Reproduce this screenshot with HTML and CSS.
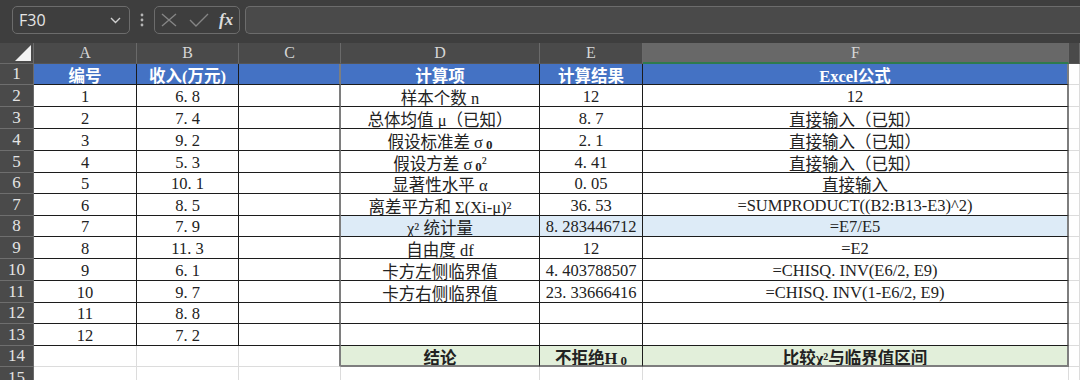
FILE: index.html
```html
<!DOCTYPE html>
<html lang="zh-CN">
<head>
    <meta charset="UTF-8">
    <meta name="viewport" content="width=device-width, initial-scale=1.0">
    <title>卡方检验 - 方差</title>
    <link rel="stylesheet" href="styles.css">
</head>
<body>
    <div class="toolbar">
        <div class="namebox">
            <span>F30</span>
            <svg class="chev" width="11" height="7" viewBox="0 0 11 7"><polyline points="1,1 5.5,5.5 10,1" fill="none" stroke="#cfcfcf" stroke-width="1.4"/></svg>
        </div>
        <svg class="dots" width="6" height="14" viewBox="0 0 6 14"><circle cx="3" cy="2" r="1.4" fill="#b5b5b5"/><circle cx="3" cy="7" r="1.4" fill="#b5b5b5"/><circle cx="3" cy="12" r="1.4" fill="#b5b5b5"/></svg>
        <div class="fxbox">
            <svg width="16" height="14" viewBox="0 0 16 14"><path d="M1 1 L15 13 M15 1 L1 13" stroke="#858585" stroke-width="1.4" fill="none"/></svg>
            <svg width="20" height="14" viewBox="0 0 20 14"><polyline points="1,7 7,13 19,1" stroke="#858585" stroke-width="1.4" fill="none"/></svg>
            <span class="fx">fx</span>
        </div>
        <div class="formula"></div>
    </div>

    <div class="sheet">
        <!-- column headers -->
        <div class="corner"><span class="tri"></span></div>
        <div class="ch">A</div>
        <div class="ch">B</div>
        <div class="ch">C</div>
        <div class="ch">D</div>
        <div class="ch">E</div>
        <div class="ch sel">F</div>
        <div class="ch"></div>

        <!-- 1 -->
        <div class="rh">1</div>
        <div class="c bk hd">编号</div>
        <div class="c bk hd">收入(万元)</div>
        <div class="c bk hd edge"></div>
        <div class="c bk hd">计算项</div>
        <div class="c bk hd">计算结果</div>
        <div class="c bk hd edge">Excel公式</div>
        <div class="c"></div>

        <!-- 2 -->
        <div class="rh">2</div>
        <div class="c bk">1</div>
        <div class="c bk">6. 8</div>
        <div class="c bk edge"></div>
        <div class="c bk">样本个数 n</div>
        <div class="c bk">12</div>
        <div class="c bk edge">12</div>
        <div class="c"></div>

        <!-- 3 -->
        <div class="rh">3</div>
        <div class="c bk">2</div>
        <div class="c bk">7. 4</div>
        <div class="c bk edge"></div>
        <div class="c bk">总体均值 μ（已知）</div>
        <div class="c bk">8. 7</div>
        <div class="c bk edge">直接输入（已知）</div>
        <div class="c"></div>

        <!-- 4 -->
        <div class="rh">4</div>
        <div class="c bk">3</div>
        <div class="c bk">9. 2</div>
        <div class="c bk edge"></div>
        <div class="c bk">假设标准差 σ<span class="sub">0</span></div>
        <div class="c bk">2. 1</div>
        <div class="c bk edge">直接输入（已知）</div>
        <div class="c"></div>

        <!-- 5 -->
        <div class="rh">5</div>
        <div class="c bk">4</div>
        <div class="c bk">5. 3</div>
        <div class="c bk edge"></div>
        <div class="c bk">假设方差 σ<span class="sub">0</span>²</div>
        <div class="c bk">4. 41</div>
        <div class="c bk edge">直接输入（已知）</div>
        <div class="c"></div>

        <!-- 6 -->
        <div class="rh">6</div>
        <div class="c bk">5</div>
        <div class="c bk">10. 1</div>
        <div class="c bk edge"></div>
        <div class="c bk">显著性水平 α</div>
        <div class="c bk">0. 05</div>
        <div class="c bk edge">直接输入</div>
        <div class="c"></div>

        <!-- 7 -->
        <div class="rh">7</div>
        <div class="c bk">6</div>
        <div class="c bk">8. 5</div>
        <div class="c bk edge"></div>
        <div class="c bk">离差平方和 Σ(Xi-μ)²</div>
        <div class="c bk">36. 53</div>
        <div class="c bk edge">=SUMPRODUCT((B2:B13-E3)^2)</div>
        <div class="c"></div>

        <!-- 8 -->
        <div class="rh">8</div>
        <div class="c bk">7</div>
        <div class="c bk">7. 9</div>
        <div class="c bk edge"></div>
        <div class="c bk hl">χ² 统计量</div>
        <div class="c bk hl">8. 283446712</div>
        <div class="c bk hl edge">=E7/E5</div>
        <div class="c"></div>

        <!-- 9 -->
        <div class="rh">9</div>
        <div class="c bk">8</div>
        <div class="c bk">11. 3</div>
        <div class="c bk edge"></div>
        <div class="c bk">自由度 df</div>
        <div class="c bk">12</div>
        <div class="c bk edge">=E2</div>
        <div class="c"></div>

        <!-- 10 -->
        <div class="rh">10</div>
        <div class="c bk">9</div>
        <div class="c bk">6. 1</div>
        <div class="c bk edge"></div>
        <div class="c bk">卡方左侧临界值</div>
        <div class="c bk">4. 403788507</div>
        <div class="c bk edge">=CHISQ. INV(E6/2, E9)</div>
        <div class="c"></div>

        <!-- 11 -->
        <div class="rh">11</div>
        <div class="c bk">10</div>
        <div class="c bk">9. 7</div>
        <div class="c bk edge"></div>
        <div class="c bk">卡方右侧临界值</div>
        <div class="c bk">23. 33666416</div>
        <div class="c bk edge">=CHISQ. INV(1-E6/2, E9)</div>
        <div class="c"></div>

        <!-- 12 -->
        <div class="rh">12</div>
        <div class="c bk">11</div>
        <div class="c bk">8. 8</div>
        <div class="c bk edge"></div>
        <div class="c bk"></div>
        <div class="c bk"></div>
        <div class="c bk edge"></div>
        <div class="c"></div>

        <!-- 13 -->
        <div class="rh">13</div>
        <div class="c bk">12</div>
        <div class="c bk">7. 2</div>
        <div class="c bk edge"></div>
        <div class="c bk"></div>
        <div class="c bk"></div>
        <div class="c bk edge"></div>
        <div class="c"></div>

        <!-- 14 -->
        <div class="rh">14</div>
        <div class="c"></div>
        <div class="c"></div>
        <div class="c edge"></div>
        <div class="c bk foot res">结论</div>
        <div class="c bk foot res">不拒绝H<span class="sub">0</span></div>
        <div class="c bk foot res edge">比较χ²与临界值区间</div>
        <div class="c"></div>

        <!-- 15 -->
        <div class="rh">15</div>
        <div class="c"></div>
        <div class="c"></div>
        <div class="c"></div>
        <div class="c"></div>
        <div class="c"></div>
        <div class="c"></div>
        <div class="c"></div>
    </div>
</body>
</html>
```

FILE: styles.css
```css
* {
    box-sizing: border-box;
}
body {
    margin: 0;
    background-color: #3e3e3e;
    overflow: hidden;
    font-family: "Liberation Serif", "Noto Sans CJK SC", serif;
}

/* formula bar */
.toolbar {
    display: flex;
    align-items: center;
    height: 43px;
    padding: 6px 0 9px 12px;
}
.namebox {
    display: flex;
    align-items: center;
    justify-content: space-between;
    width: 118px;
    height: 28px;
    padding: 0 8px 0 6px;
    border: 1px solid #6c6c6c;
    border-radius: 5px;
    color: #e6e6e6;
    font-family: "Open Sans", "Noto Sans", sans-serif;
    font-size: 16px;
}
.dots {
    margin: 0 9px 0 9px;
}
.fxbox {
    display: flex;
    align-items: center;
    gap: 12px;
    width: 86px;
    height: 28px;
    padding-left: 6px;
    border: 1px solid #6c6c6c;
    border-radius: 5px;
}
.fx {
    color: #dcdcdc;
    font-style: italic;
    font-weight: bold;
    font-size: 17px;
    margin-left: -2px;
}
.formula {
    flex: 1;
    height: 28px;
    margin-left: 5px;
    border: 1px solid #6c6c6c;
    border-right: none;
    border-radius: 5px 0 0 5px;
    background-color: #4a4a4a;
}

/* grid */
.sheet {
    display: grid;
    grid-template-columns: 34px 103px 102px 102px 199px 103px 426px 1fr;
    grid-template-rows: 21px 21px 22px 22px 22px 22px 21px 22px 21px 22px 22px 22px 21px 22px 21px 22px;
    font-size: 16.5px;
    color: #222;
}
.corner {
    position: relative;
    background-color: #4a4a4a;
    border-right: 1px solid #6a6a6a;
    border-bottom: 1px solid #6a6a6a;
}
.tri {
    position: absolute;
    right: 2px;
    bottom: 2px;
    width: 0;
    height: 0;
    border-left: 16px solid transparent;
    border-bottom: 16px solid #f2f2f2;
}
.ch {
    display: flex;
    align-items: center;
    justify-content: center;
    background-color: #4a4a4a;
    color: #d6d6d6;
    font-size: 16px;
    border-right: 1px solid #6a6a6a;
    border-bottom: 1px solid #555;
}
.ch.sel {
    background-color: #686868;
    border-bottom: 2px solid #2f7a4e;
}
.rh {
    display: flex;
    align-items: center;
    justify-content: center;
    background-color: #4a4a4a;
    color: #e4e4e4;
    font-size: 17px;
    border-right: 1px solid #6a6a6a;
    border-bottom: 1px solid #6e6e6e;
}
.c {
    display: flex;
    align-items: center;
    justify-content: center;
    padding-top: 2px;
    white-space: nowrap;
    overflow: hidden;
    background-color: #fff;
    border-right: 1px solid #dcdcdc;
    border-bottom: 1px solid #dcdcdc;
}
.c.bk {
    border-color: #1c1c1c;
}
.c.edge {
    border-right: 2px solid #7e7e7e;
}
.c.foot {
    border-bottom: 2px solid #7e7e7e;
}
.hd {
    background-color: #4472c4;
    color: #fff;
    font-weight: bold;
}
.hl {
    background-color: #ddebf7;
}
.res {
    background-color: #e2efda;
    font-weight: bold;
}
.sub {
    position: relative;
    top: 4px;
    font-size: 13px;
    font-weight: bold;
    margin-left: 3px;
}
```
